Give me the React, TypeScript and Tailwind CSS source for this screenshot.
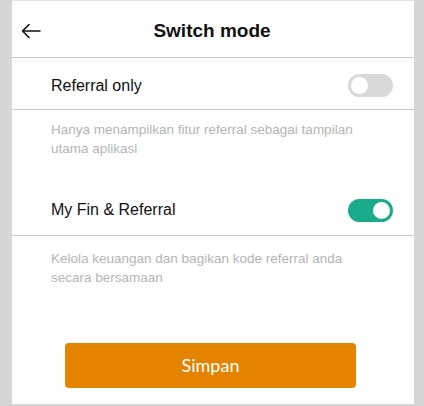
import React, { useState } from 'react'

function Toggle({ on, onClick }: { on: boolean; onClick: () => void }) {
  return (
    <button
      onClick={onClick}
      className={`flex h-[23px] w-[45px] items-center rounded-full px-[3px] ${on ? 'justify-end bg-[#19ab8b]' : 'justify-start bg-[#d9d9d9]'}`}
    >
      <span className="h-[17px] w-[17px] rounded-full bg-white" />
    </button>
  )
}

export default function App() {
  const [mode, setMode] = useState<'referral' | 'myfin'>('myfin')

  return (
    <div className="flex h-[406px] w-[424px] bg-[#d6d6d6] pb-[2px] pl-[12px] pr-[10px]" style={{ fontFamily: '"Liberation Sans", Arial, sans-serif' }}>
      <div className="flex flex-1 flex-col border-t border-[#e4e4e4] bg-white">
        <div className="flex h-[57px] items-center border-b border-[#c9c9c9] pl-[9px] pt-[4px]">
          <svg width="20" height="16" viewBox="0 0 20 16" fill="none" stroke="#111" strokeWidth="1.6" strokeLinecap="round" strokeLinejoin="round">
            <path d="M19 8H2M8 1.5L1.5 8L8 14.5" />
          </svg>
          <div className="flex-1 pr-[31px] text-center text-[19px] font-semibold text-[#111]">Switch mode</div>
        </div>

        <div className="flex h-[52px] items-center justify-between border-b border-[#c9c9c9] pl-[39px] pr-[21px] pt-[4px]">
          <span className="text-[16px] text-[#111]">Referral only</span>
          <Toggle on={mode === 'referral'} onClick={() => setMode('referral')} />
        </div>
        <p className="h-[75px] pl-[39px] pr-[50px] pt-[10px] text-[13.5px] leading-[19px] text-[#b5b5b5]">
          Hanya menampilkan fitur referral sebagai tampilan utama aplikasi
        </p>

        <div className="flex h-[51px] items-center justify-between border-b border-[#c9c9c9] pl-[39px] pr-[21px]">
          <span className="text-[16px] text-[#111]">My Fin &amp; Referral</span>
          <Toggle on={mode === 'myfin'} onClick={() => setMode('myfin')} />
        </div>
        <p className="pl-[39px] pr-[50px] pt-[13px] text-[13.5px] leading-[19px] text-[#b5b5b5]">
          Kelola keuangan dan bagikan kode referral anda secara bersamaan
        </p>

        <div className="mt-[56px] flex justify-center pr-[5px]">
          <button className="h-[45px] w-[291px] rounded-[4px] bg-[#e38300] text-[18px] text-white" style={{ fontFamily: 'Lato, sans-serif' }}>
            Simpan
          </button>
        </div>
      </div>
    </div>
  )
}
